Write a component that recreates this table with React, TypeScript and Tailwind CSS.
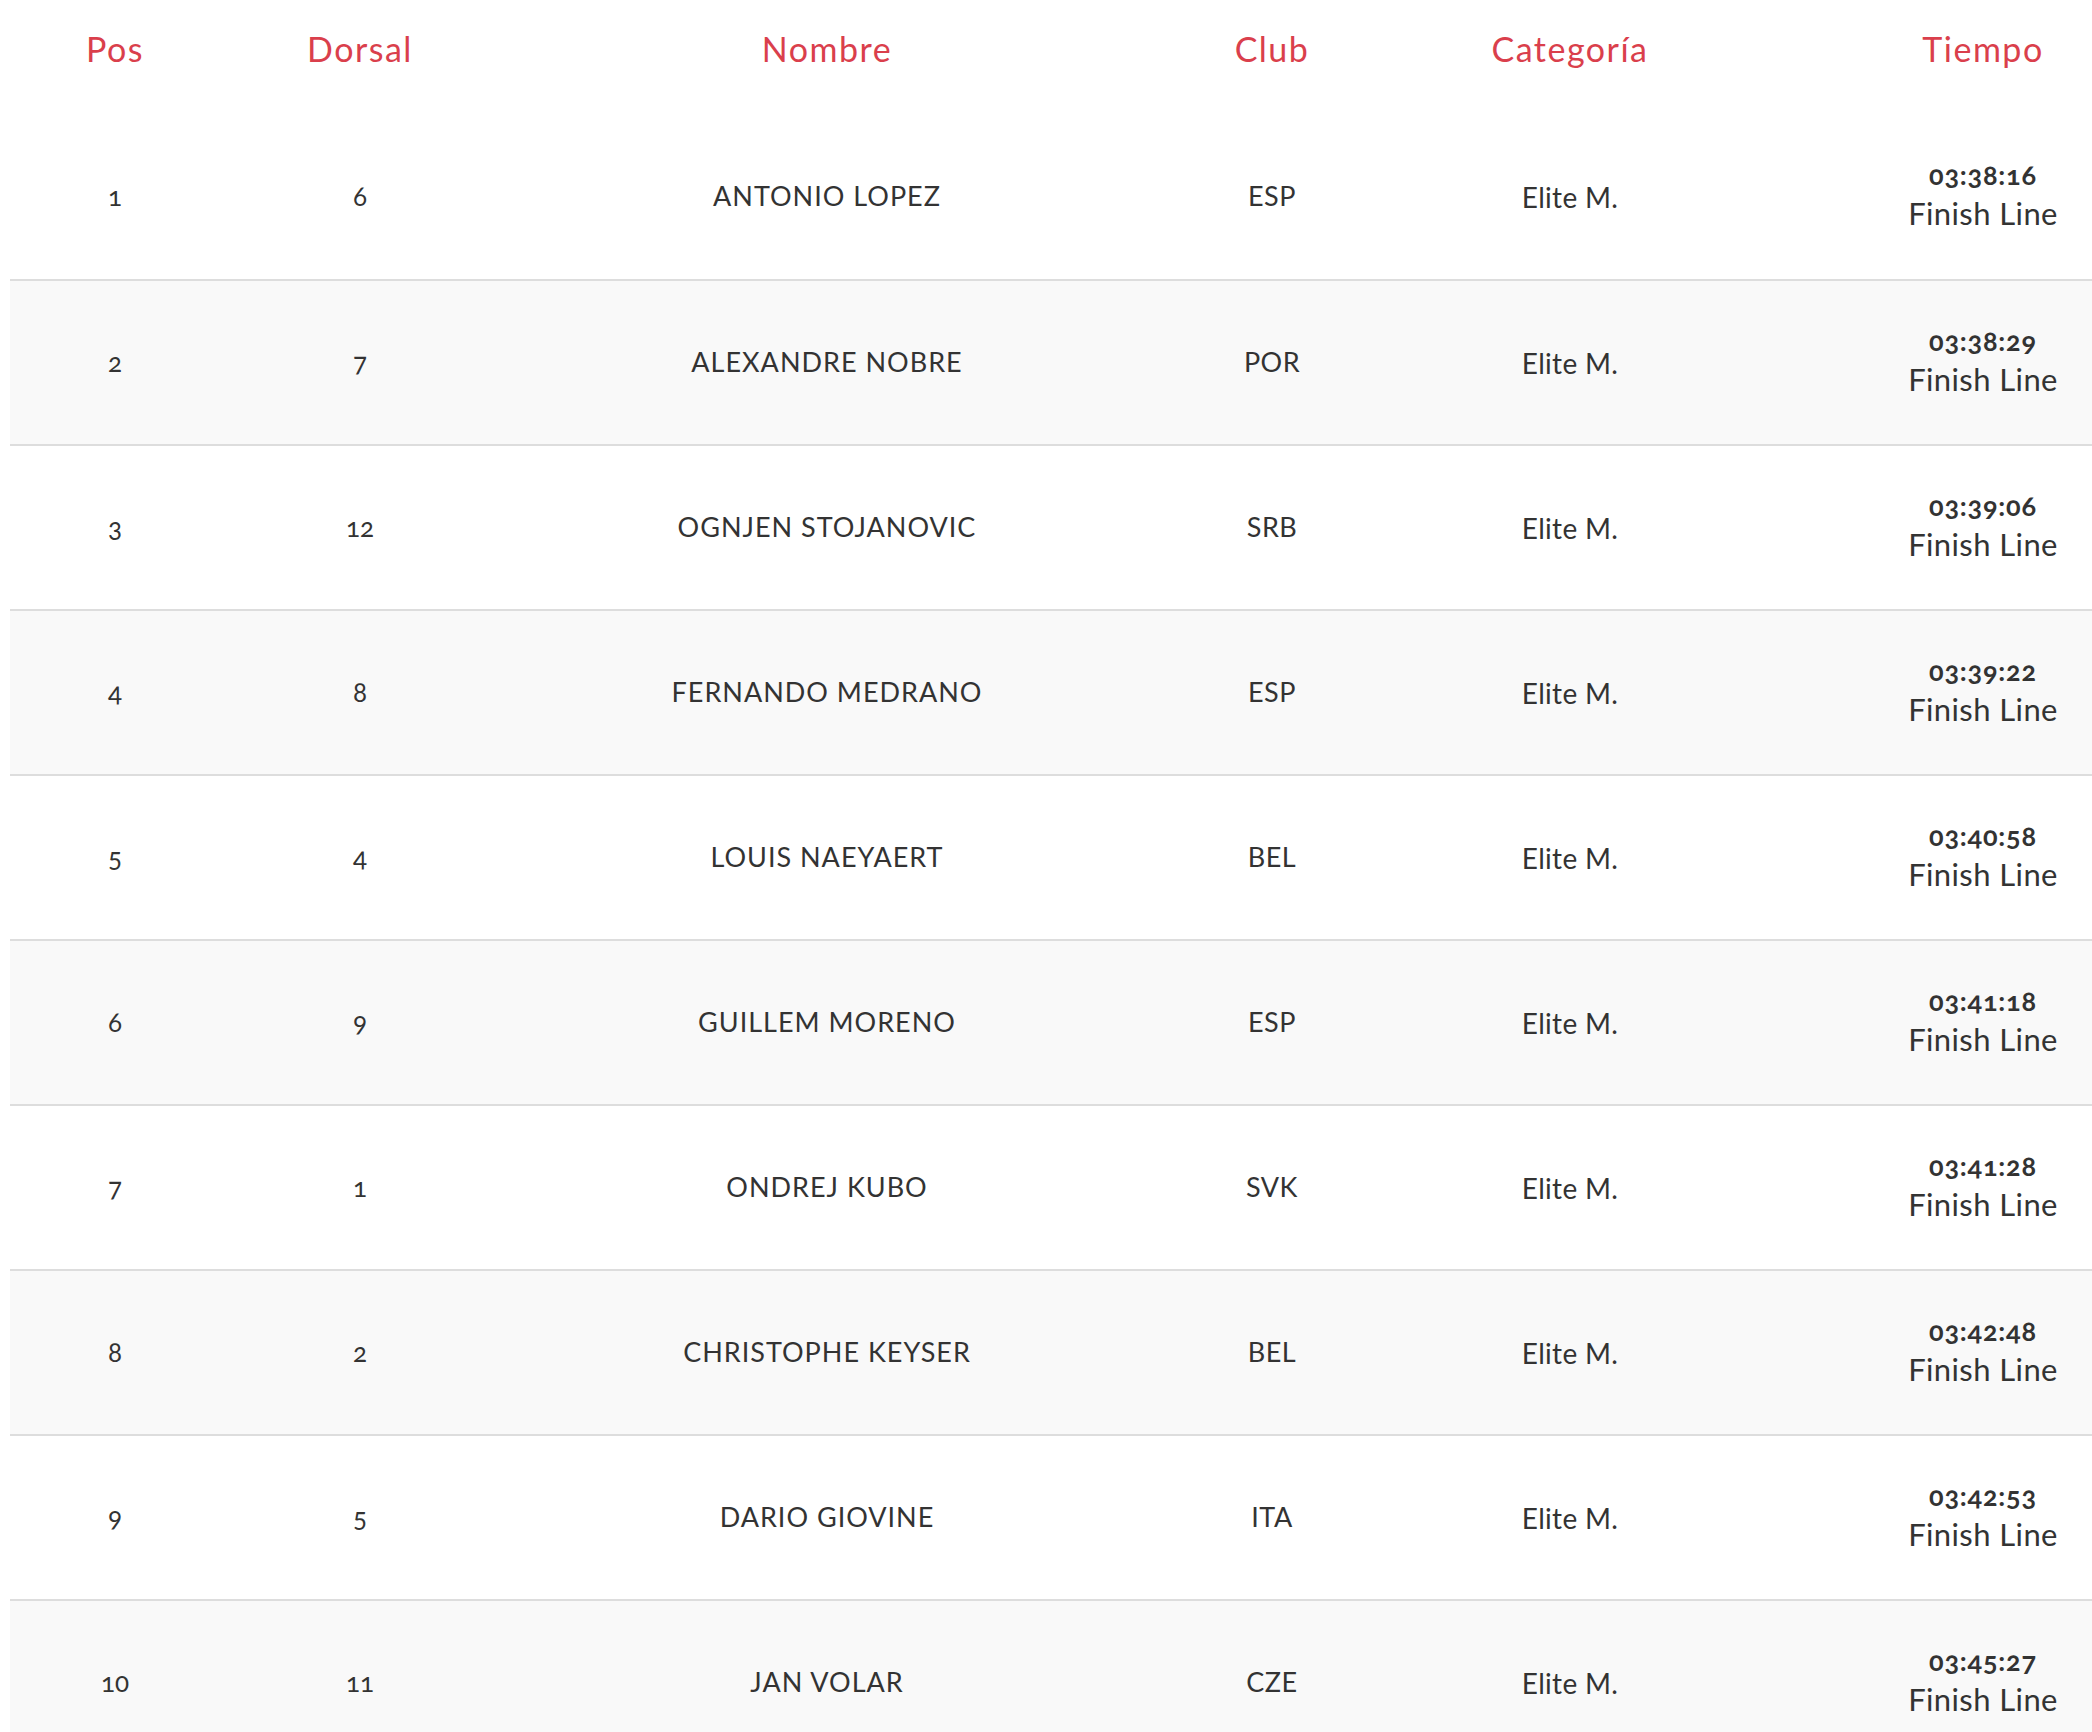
import React from "react";

const rows = [
  ["1", "6", "ANTONIO LOPEZ", "ESP", "03:38:16"],
  ["2", "7", "ALEXANDRE NOBRE", "POR", "03:38:29"],
  ["3", "12", "OGNJEN STOJANOVIC", "SRB", "03:39:06"],
  ["4", "8", "FERNANDO MEDRANO", "ESP", "03:39:22"],
  ["5", "4", "LOUIS NAEYAERT", "BEL", "03:40:58"],
  ["6", "9", "GUILLEM MORENO", "ESP", "03:41:18"],
  ["7", "1", "ONDREJ KUBO", "SVK", "03:41:28"],
  ["8", "2", "CHRISTOPHE KEYSER", "BEL", "03:42:48"],
  ["9", "5", "DARIO GIOVINE", "ITA", "03:42:53"],
  ["10", "11", "JAN VOLAR", "CZE", "03:45:27"],
];

const grid = "grid grid-cols-[210px_280px_654px_236px_360px_466px] w-[2206px]";

export default function App() {
  return (
    <div className="w-[2092px] h-[1732px] overflow-hidden bg-white pl-[10px] font-['Lato',sans-serif] text-[#333333] oldstyle-nums">
      <div className={`${grid} h-[114px] items-center text-[34px] tracking-[1.5px] text-[#da3f4c] pb-[17px]`}>
        <div className="text-center">Pos</div>
        <div className="text-center">Dorsal</div>
        <div className="text-center">Nombre</div>
        <div className="text-center">Club</div>
        <div className="text-center">Categoría</div>
        <div className="text-center">Tiempo</div>
      </div>
      {rows.map((r, i) => (
        <div
          key={i}
          className={`${grid} h-[165px] items-center text-[27px] ${i > 0 ? "border-t-2 border-[#dddddd]" : ""} ${i % 2 === 1 ? "bg-[#f9f9f9]" : "bg-white"}`}
        >
          <div className="text-center text-[26px]">{r[0]}</div>
          <div className="text-center text-[26px]">{r[1]}</div>
          <div className="text-center tracking-[1px]">{r[2]}</div>
          <div className="text-center tracking-[0.5px]">{r[3]}</div>
          <div className="text-center text-[28px] tracking-[0.3px]">Elite M.</div>
          <div className="text-center flex flex-col items-center pb-[2px]">
            <span className="font-bold text-[27px] tracking-[0.8px] leading-[35px]">{r[4]}</span>
            <span className="text-[31px] tracking-[0.4px] leading-[43px]">Finish Line</span>
          </div>
        </div>
      ))}
    </div>
  );
}
